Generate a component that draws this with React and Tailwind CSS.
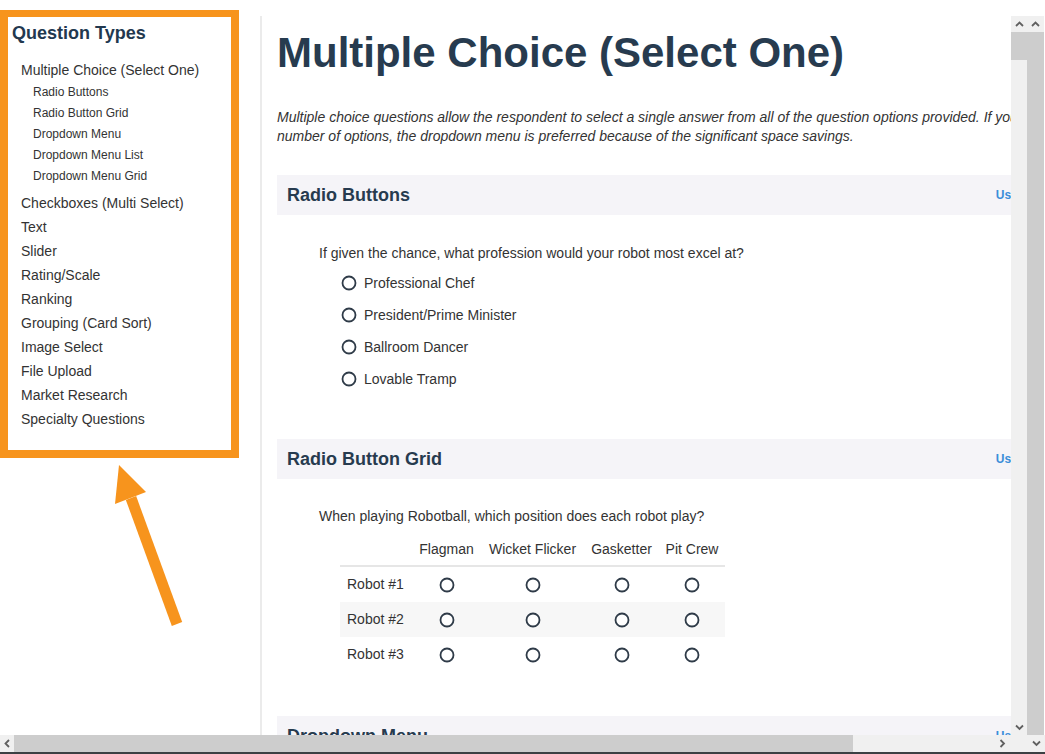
const navSub = [
  'Radio Buttons',
  'Radio Button Grid',
  'Dropdown Menu',
  'Dropdown Menu List',
  'Dropdown Menu Grid',
];

const navMain = [
  'Checkboxes (Multi Select)',
  'Text',
  'Slider',
  'Rating/Scale',
  'Ranking',
  'Grouping (Card Sort)',
  'Image Select',
  'File Upload',
  'Market Research',
  'Specialty Questions',
];

const professions = [
  'Professional Chef',
  'President/Prime Minister',
  'Ballroom Dancer',
  'Lovable Tramp',
];

const positions = ['Flagman', 'Wicket Flicker', 'Gasketter', 'Pit Crew'];
const robots = ['Robot #1', 'Robot #2', 'Robot #3'];

function Radio() {
  return (
    <svg width="16" height="16" viewBox="0 0 16 16" className="shrink-0">
      <circle cx="8" cy="8" r="6.5" fill="white" stroke="#2f3b48" strokeWidth="1.8" />
    </svg>
  );
}

function Chevron({ dir }) {
  const pts = {
    up: '1,6 4.5,2.5 8,6',
    down: '1,2.5 4.5,6 8,2.5',
    left: '6,1 2.5,4.5 6,8',
    right: '2.5,1 6,4.5 2.5,8',
  }[dir];
  return (
    <svg width="9" height="9" viewBox="0 0 9 9">
      <polyline points={pts} fill="none" stroke="#606060" strokeWidth="1.8" />
    </svg>
  );
}

function SectionBar({ title }) {
  return (
    <div className="flex h-[40px] items-center bg-[#f5f4f8] px-[10px]">
      <h2 className="text-[18px] font-bold text-[#273b4f]">{title}</h2>
      <span className="ml-auto text-[12px] font-bold text-[#3b8ed8]">Use Template</span>
    </div>
  );
}

export default function App() {
  return (
    <div className="flex h-[754px] w-[1045px] flex-col overflow-hidden bg-white font-['Liberation_Sans',Arial,sans-serif] text-[#333]">
      {/* ── Page + vertical scrollbars ───────────────────────── */}
      <div className="flex h-[735px]">
        {/* Sidebar */}
        <div className="w-[239px] shrink-0 pt-[10px]">
          <div className="h-[448px] border-8 border-t-[7px] border-[#f7941d] bg-white pl-[4px] pt-[4px]">
            <h3 className="text-[18px] leading-[24px] font-bold text-[#22384f]">Question Types</h3>
            <ul className="mt-[13px] pl-[9px]">
              <li className="text-[14px] leading-[24px]">Multiple Choice (Select One)</li>
              {navSub.map((s) => (
                <li key={s} className="pl-[12px] text-[12px] leading-[21px]">{s}</li>
              ))}
              <li className="h-[4px]" />
              {navMain.map((s) => (
                <li key={s} className="text-[14px] leading-[24px]">{s}</li>
              ))}
            </ul>
          </div>
          <svg width="239" height="200" viewBox="0 0 239 200" className="block">
            <line x1="131" y1="40" x2="177" y2="166" stroke="#f7941d" strokeWidth="11" />
            <polygon points="119,7 146,34 115,46" fill="#f7941d" />
          </svg>
        </div>

        {/* Divider */}
        <div className="ml-[21px] mt-[16px] w-[2px] shrink-0 bg-[#ebebeb]" />

        {/* Main content */}
        <div className="w-[749px] shrink-0 overflow-hidden pl-[15px] pt-[29px]">
          <div className="w-[806px]">
            <h1 className="text-[42px] leading-[48px] font-bold text-[#273b4f]">
              Multiple Choice (Select One)
            </h1>
            <p className="mt-[31px] text-[14px] leading-[19px] italic">
              <span className="block whitespace-nowrap">
                Multiple choice questions allow the respondent to select a single answer from all of the question options provided. If you have a large
              </span>
              <span className="block whitespace-nowrap">
                number of options, the dropdown menu is preferred because of the significant space savings.
              </span>
            </p>

            <div className="mt-[29px]">
              <SectionBar title="Radio Buttons" />
            </div>
            <div className="pl-[42px] pt-[28px]">
              <p className="text-[14px] leading-[20px]">
                If given the chance, what profession would your robot most excel at?
              </p>
              <div className="mt-[4px] pl-[22px]">
                {professions.map((p) => (
                  <label key={p} className="flex h-[32px] items-center gap-[7px] text-[14px]">
                    <Radio />
                    {p}
                  </label>
                ))}
              </div>
            </div>

            <div className="mt-[44px]">
              <SectionBar title="Radio Button Grid" />
            </div>
            <div className="pl-[42px] pt-[27px]">
              <p className="text-[14px] leading-[20px]">
                When playing Robotball, which position does each robot play?
              </p>
              <div className="mt-[7px] ml-[21px] w-[385px] text-[14px]">
                <div className="grid h-[34px] grid-cols-[72px_69px_103px_75px_66px] items-center border-b-2 border-[#e6e6e6]">
                  <span />
                  {positions.map((p) => (
                    <span key={p} className="text-center whitespace-nowrap">{p}</span>
                  ))}
                </div>
                {robots.map((r, i) => (
                  <div
                    key={r}
                    className={`grid h-[35px] grid-cols-[72px_69px_103px_75px_66px] items-center ${i === 1 ? 'bg-[#f7f7f7]' : ''}`}
                  >
                    <span className="pl-[7px]">{r}</span>
                    {positions.map((p) => (
                      <span key={p} className="flex justify-center"><Radio /></span>
                    ))}
                  </div>
                ))}
              </div>
            </div>

            <div className="mt-[44px]">
              <SectionBar title="Dropdown Menu" />
            </div>
          </div>
        </div>

        {/* Inner vertical scrollbar */}
        <div className="flex w-[16px] shrink-0 flex-col pt-[16px]">
          <div className="flex h-[16px] items-center justify-center bg-[#f0f0f0]"><Chevron dir="up" /></div>
          <div className="h-[28px] bg-[#cdcdcd]" />
          <div className="flex-1 bg-[#f0f0f0]" />
          <div className="flex h-[16px] items-center justify-center bg-[#f0f0f0]"><Chevron dir="down" /></div>
        </div>

        {/* Outer vertical scrollbar */}
        <div className="flex w-[17px] shrink-0 flex-col pt-[16px]">
          <div className="flex h-[16px] items-center justify-center bg-[#f0f0f0]"><Chevron dir="up" /></div>
          <div className="flex-1 bg-[#cdcdcd]" />
        </div>
      </div>

      {/* ── Horizontal scrollbar ─────────────────────────────── */}
      <div className="flex h-[17px]">
        <div className="flex w-[14px] items-center justify-center bg-[#f0f0f0]"><Chevron dir="left" /></div>
        <div className="w-[839px] bg-[#cdcdcd]" />
        <div className="flex flex-1 items-center justify-end bg-[#f0f0f0] pr-[21px]"><Chevron dir="right" /></div>
        <div className="flex w-[17px] items-center justify-center bg-[#f0f0f0]"><Chevron dir="down" /></div>
      </div>
      <div className="h-[2px] bg-[#3c4043]" />
    </div>
  );
}
